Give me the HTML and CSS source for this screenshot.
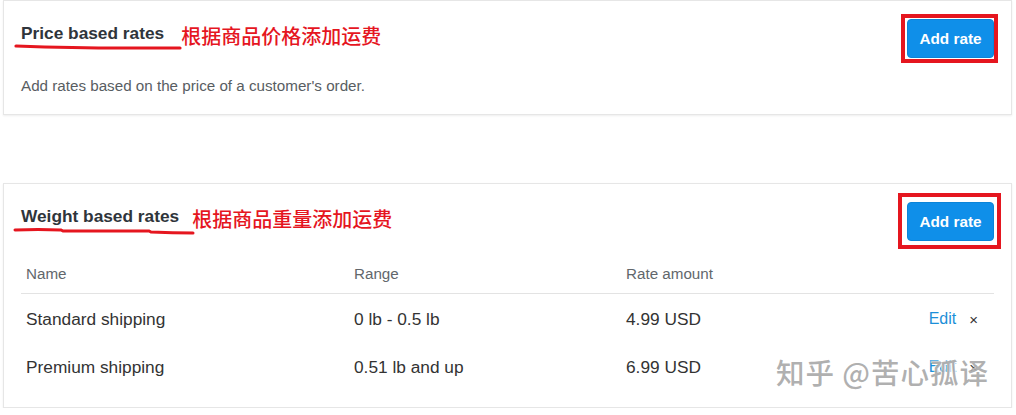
FILE: index.html
```html
<!DOCTYPE html>
<html lang="en">
<head>
<meta charset="utf-8">
<title>Shipping rates</title>
<link rel="stylesheet" href="styles.css">
</head>
<body>
<div class="page">
  <section class="card card-price">
    <div class="card-head">
      <div class="title-wrap">
        <h2 class="title">Price based rates</h2>
        <span class="note">根据商品价格添加运费</span>
        <svg class="scribble scribble-1" width="170" height="8" viewBox="0 0 170 8"><path d="M2 3 Q 60 5 110 5 T 166 5" fill="none" stroke="#e5161f" stroke-width="3.2" stroke-linecap="round"/></svg>
      </div>
      <span class="btn-wrap mark-1"><button class="btn">Add rate</button></span>
    </div>
    <p class="desc">Add rates based on the price of a customer's order.</p>
  </section>

  <section class="card card-weight">
    <div class="card-head">
      <div class="title-wrap">
        <h2 class="title">Weight based rates</h2>
        <span class="note note-2">根据商品重量添加运费</span>
        <svg class="scribble scribble-2" width="184" height="10" viewBox="0 0 184 10"><path d="M2 3 Q 25 2 48 3 L 50 4 Q 90 4 136 4 L 138 5 Q 160 6 180 6" fill="none" stroke="#e5161f" stroke-width="3" stroke-linecap="round"/></svg>
      </div>
      <span class="btn-wrap mark-2"><button class="btn">Add rate</button></span>
    </div>
    <div class="table">
      <div class="row head">
        <div class="cell">Name</div>
        <div class="cell">Range</div>
        <div class="cell">Rate amount</div>
        <div class="cell"></div>
      </div>
      <div class="row">
        <div class="cell">Standard shipping</div>
        <div class="cell">0 lb - 0.5 lb</div>
        <div class="cell">4.99 USD</div>
        <div class="cell actions"><a class="edit">Edit</a><span class="del">×</span></div>
      </div>
      <div class="row">
        <div class="cell">Premium shipping</div>
        <div class="cell">0.51 lb and up</div>
        <div class="cell">6.99 USD</div>
        <div class="cell actions"><a class="edit">Edit</a><span class="del">×</span></div>
      </div>
    </div>
    <div class="watermark">知乎 @苦心孤译</div>
  </section>
</div>
</body>
</html>
```

FILE: styles.css
```css
html, body {
  margin: 0;
  padding: 0;
  background: #ffffff;
}

body {
  font-family: "Liberation Sans", Arial, sans-serif;
  color: #333333;
}

.page {
  padding: 0 4px 0 3px;
}

.card {
  position: relative;
  background: #fff;
  border: 1px solid #e6e6e6;
  box-shadow: 0 1px 2px rgba(0, 0, 0, 0.07);
  padding: 18px 17px 19px 17px;
}

.card-weight {
  margin-top: 68px;
  padding-bottom: 17px;
}

.card-head {
  display: flex;
  justify-content: space-between;
  align-items: flex-start;
}

.title-wrap {
  position: relative;
  display: flex;
  align-items: flex-start;
  padding-top: 4px;
}

.title {
  margin: 0;
  font-size: 17.3px;
  line-height: 20px;
  font-weight: bold;
  color: #2f353b;
}

.note {
  margin-left: 17px;
  margin-top: 3px;
  font-family: "Noto Sans CJK SC", sans-serif;
  font-size: 20px;
  line-height: 20px;
  font-weight: 500;
  color: #e5161f;
}

.note-2 {
  margin-left: 13px;
}

.scribble {
  position: absolute;
  left: -7px;
}

.scribble-1 {
  top: 24px;
}

.scribble-2 {
  left: -8px;
  top: 25px;
}

.btn-wrap {
  position: relative;
  display: block;
}

.btn-wrap::after {
  content: "";
  position: absolute;
  border: 4px solid #e5161f;
  pointer-events: none;
}

.mark-1::after {
  top: -5px;
  left: -6px;
  right: -4px;
  bottom: -5px;
}

.mark-2::after {
  top: -9px;
  left: -9px;
  right: -7px;
  bottom: -8px;
}

.btn {
  display: block;
  width: 87px;
  height: 39px;
  border: 1px solid #0b84d8;
  border-radius: 4px;
  background: #0f8fe9;
  color: #ffffff;
  font-family: "Liberation Sans", Arial, sans-serif;
  font-size: 15.3px;
  font-weight: bold;
  padding: 0;
}

.desc {
  margin: 18px 0 0 0;
  font-size: 15.2px;
  line-height: 20px;
  color: #585d62;
}

.card-price {
  padding-bottom: 18px;
}

.table {
  margin-top: 11px;
}

.row {
  display: grid;
  grid-template-columns: 328px 272px 1fr 120px;
  box-sizing: border-box;
  height: 48px;
  padding-top: 2px;
  align-items: center;
  font-size: 17.3px;
  color: #333;
}

.row.head {
  height: 42px;
  padding-top: 1px;
  border-bottom: 1px solid #e3e3e3;
  font-size: 15.2px;
  color: #62676c;
}

.cell {
  padding-left: 5px;
}

.actions {
  display: flex;
  justify-content: flex-end;
  align-items: center;
  padding-right: 16px;
}

.edit {
  color: #1c8fd8;
  font-size: 16px;
  margin-right: 13px;
  cursor: pointer;
}

.del {
  font-size: 15px;
  color: #333;
}

.watermark {
  position: absolute;
  right: 22px;
  bottom: 18px;
  font-family: "Noto Sans CJK SC", sans-serif;
  font-size: 28.5px;
  line-height: 34px;
  font-weight: 500;
  color: rgba(150, 150, 150, 0.75);
  text-shadow: 1px 1px 0 rgba(255, 255, 255, 0.9), -1px -1px 0 rgba(255, 255, 255, 0.6);
  letter-spacing: 1px;
}
```
